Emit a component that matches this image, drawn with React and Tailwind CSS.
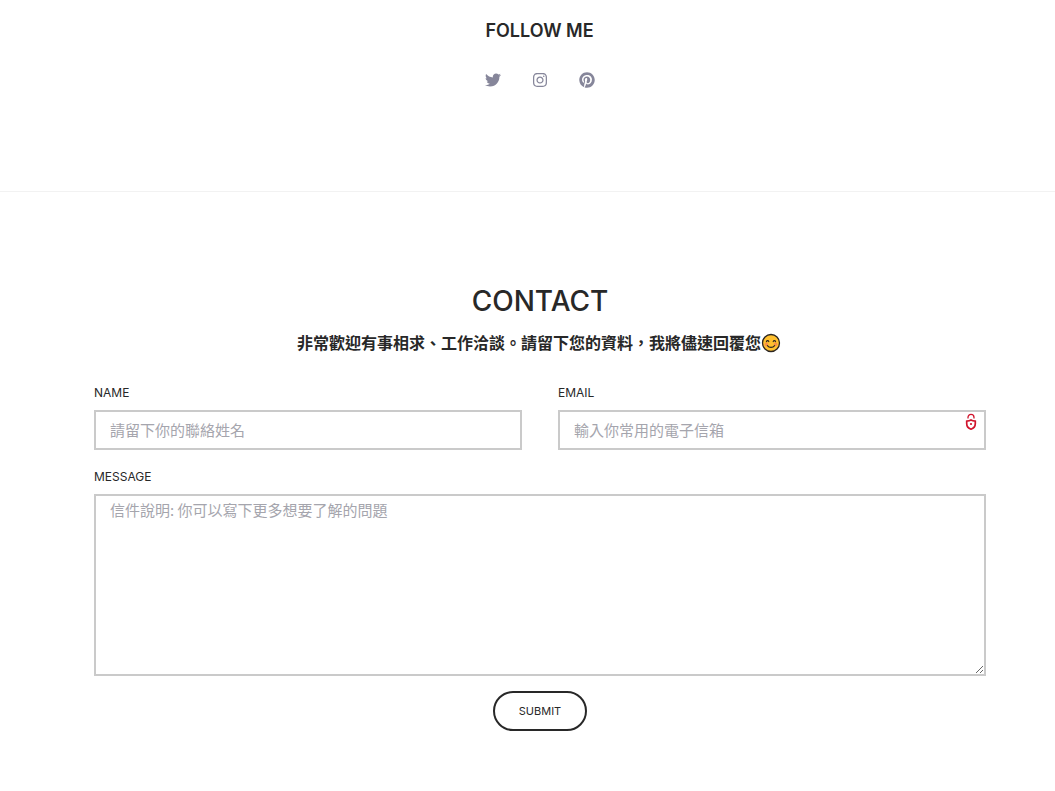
import { FaTwitter, FaInstagram, FaPinterest } from 'react-icons/fa';

const socials = [
  { name: 'Twitter', icon: FaTwitter },
  { name: 'Instagram', icon: FaInstagram },
  { name: 'Pinterest', icon: FaPinterest },
];

const labelClass = 'block text-xs leading-4 mb-[9px]';
const fieldClass =
  "block w-full border-2 border-[#cacaca] bg-white px-[14px] text-[15px] leading-5 font-['Noto_Sans_CJK_TC',sans-serif] placeholder:text-[#a5a5ad] outline-none focus:border-[#282828]";

function SmileIcon() {
  return (
    <svg viewBox="0 0 20 20" className="inline-block w-5 h-5 align-[-4px]" role="img" aria-label="😊">
      <circle cx="10" cy="10" r="8.5" fill="#ffc02e" stroke="#2b2520" strokeWidth="1.3" />
      <circle cx="5.4" cy="11.4" r="1.8" fill="#f5804e" opacity="0.75" />
      <circle cx="14.6" cy="11.4" r="1.8" fill="#f5804e" opacity="0.75" />
      <g fill="none" stroke="#2b2520" strokeWidth="1.1" strokeLinecap="round">
        <path d="M5.4 8.6c.4-1.3 2-1.3 2.4 0" />
        <path d="M12.2 8.6c.4-1.3 2-1.3 2.4 0" />
        <path d="M6.4 12.6c1.7 2.3 5.5 2.3 7.2 0" />
      </g>
    </svg>
  );
}

function LockIcon() {
  return (
    <svg viewBox="0 0 12 18" className="w-3 h-[18px]" fill="none" aria-hidden="true">
      <path d="M3 5.6V4.4a3 3 0 0 1 6 0v1.2" stroke="#d0142c" strokeWidth="1.3" />
      <path d="M1.7 8.2C3.4 8 4.8 7.7 6 7c1.2.7 2.6 1 4.3 1.2v2.4c0 2.9-1.8 4.9-4.3 5.6-2.5-.7-4.3-2.7-4.3-5.6z" stroke="#d0142c" strokeWidth="1.7" />
      <circle cx="6" cy="11" r="1.1" fill="#d0142c" />
    </svg>
  );
}

export default function App() {
  return (
    <div className="bg-white text-[#282828] font-['Inter','Noto_Sans_CJK_TC',sans-serif]">
      <section className="flex flex-col items-center pt-[17px] pb-[103px] pl-6 border-b border-[#f2f2f2]">
        <h2 className="text-lg leading-7 font-semibold">FOLLOW ME</h2>
        <div className="flex gap-[31px] mt-[27px]">
          {socials.map(({ name, icon: Icon }) => (
            <a key={name} href="#" aria-label={name} className="text-[#86869a]">
              <Icon className="w-4 h-4" />
            </a>
          ))}
        </div>
      </section>

      <section className="pt-[91px] pb-[60px] pl-[94px] pr-[69px]">
        <h2 className="text-center text-[28px] leading-9 font-medium">CONTACT</h2>
        <p className="mt-3 pr-0.5 text-center text-base leading-6 font-bold">
          非常歡迎有事相求、工作洽談。請留下您的資料，我將儘速回覆您
          <SmileIcon />
        </p>

        <form className="mt-[30px]" onSubmit={(e) => e.preventDefault()}>
          <div className="grid grid-cols-2 gap-9">
            <div>
              <label htmlFor="name" className={labelClass}>NAME</label>
              <input id="name" type="text" placeholder="請留下你的聯絡姓名" className={`${fieldClass} h-10 pb-0.5`} />
            </div>
            <div>
              <label htmlFor="email" className={labelClass}>EMAIL</label>
              <div className="relative">
                <input id="email" type="email" placeholder="輸入你常用的電子信箱" className={`${fieldClass} h-10 pb-0.5`} />
                <span className="absolute right-[9px] top-[3px]">
                  <LockIcon />
                </span>
              </div>
            </div>
          </div>

          <div className="mt-[19px]">
            <label htmlFor="message" className={labelClass}>MESSAGE</label>
            <textarea
              id="message"
              placeholder="信件說明: 你可以寫下更多想要了解的問題"
              className={`${fieldClass} h-[182px] pt-1 resize`}
            />
          </div>

          <div className="mt-[15px] text-center">
            <button type="submit" className="h-10 px-6 rounded-full border-2 border-[#282828] text-[11px] leading-4">
              SUBMIT
            </button>
          </div>
        </form>
      </section>
    </div>
  );
}
